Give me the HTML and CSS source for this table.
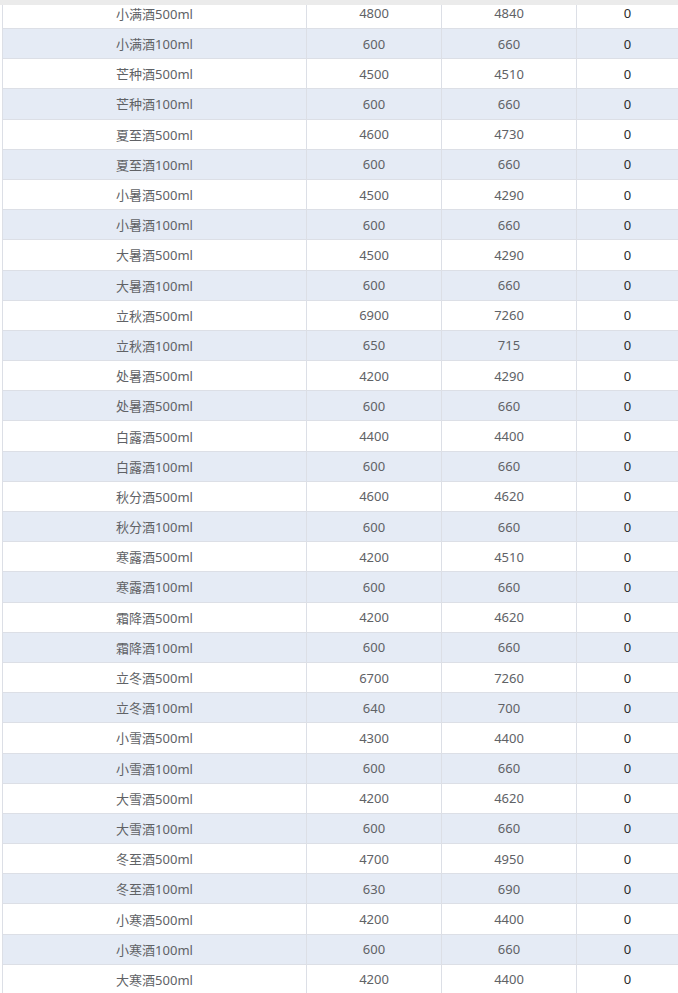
FILE: index.html
```html
<!DOCTYPE html>
<html lang="zh-CN">
<head>
<meta charset="utf-8">
<title>价格表</title>
<link rel="stylesheet" href="styles.css">
</head>
<body>
<div class="topbar"></div>
<div class="wrap">
  <div class="table" id="tbl">
    <div class="row"><div class="c c1">小满酒500ml</div><div class="c c2">4800</div><div class="c c3">4840</div><div class="c c4">0</div></div>
    <div class="row alt"><div class="c c1">小满酒100ml</div><div class="c c2">600</div><div class="c c3">660</div><div class="c c4">0</div></div>
    <div class="row"><div class="c c1">芒种酒500ml</div><div class="c c2">4500</div><div class="c c3">4510</div><div class="c c4">0</div></div>
    <div class="row alt"><div class="c c1">芒种酒100ml</div><div class="c c2">600</div><div class="c c3">660</div><div class="c c4">0</div></div>
    <div class="row"><div class="c c1">夏至酒500ml</div><div class="c c2">4600</div><div class="c c3">4730</div><div class="c c4">0</div></div>
    <div class="row alt"><div class="c c1">夏至酒100ml</div><div class="c c2">600</div><div class="c c3">660</div><div class="c c4">0</div></div>
    <div class="row"><div class="c c1">小暑酒500ml</div><div class="c c2">4500</div><div class="c c3">4290</div><div class="c c4">0</div></div>
    <div class="row alt"><div class="c c1">小暑酒100ml</div><div class="c c2">600</div><div class="c c3">660</div><div class="c c4">0</div></div>
    <div class="row"><div class="c c1">大暑酒500ml</div><div class="c c2">4500</div><div class="c c3">4290</div><div class="c c4">0</div></div>
    <div class="row alt"><div class="c c1">大暑酒100ml</div><div class="c c2">600</div><div class="c c3">660</div><div class="c c4">0</div></div>
    <div class="row"><div class="c c1">立秋酒500ml</div><div class="c c2">6900</div><div class="c c3">7260</div><div class="c c4">0</div></div>
    <div class="row alt"><div class="c c1">立秋酒100ml</div><div class="c c2">650</div><div class="c c3">715</div><div class="c c4">0</div></div>
    <div class="row"><div class="c c1">处暑酒500ml</div><div class="c c2">4200</div><div class="c c3">4290</div><div class="c c4">0</div></div>
    <div class="row alt"><div class="c c1">处暑酒500ml</div><div class="c c2">600</div><div class="c c3">660</div><div class="c c4">0</div></div>
    <div class="row"><div class="c c1">白露酒500ml</div><div class="c c2">4400</div><div class="c c3">4400</div><div class="c c4">0</div></div>
    <div class="row alt"><div class="c c1">白露酒100ml</div><div class="c c2">600</div><div class="c c3">660</div><div class="c c4">0</div></div>
    <div class="row"><div class="c c1">秋分酒500ml</div><div class="c c2">4600</div><div class="c c3">4620</div><div class="c c4">0</div></div>
    <div class="row alt"><div class="c c1">秋分酒100ml</div><div class="c c2">600</div><div class="c c3">660</div><div class="c c4">0</div></div>
    <div class="row"><div class="c c1">寒露酒500ml</div><div class="c c2">4200</div><div class="c c3">4510</div><div class="c c4">0</div></div>
    <div class="row alt"><div class="c c1">寒露酒100ml</div><div class="c c2">600</div><div class="c c3">660</div><div class="c c4">0</div></div>
    <div class="row"><div class="c c1">霜降酒500ml</div><div class="c c2">4200</div><div class="c c3">4620</div><div class="c c4">0</div></div>
    <div class="row alt"><div class="c c1">霜降酒100ml</div><div class="c c2">600</div><div class="c c3">660</div><div class="c c4">0</div></div>
    <div class="row"><div class="c c1">立冬酒500ml</div><div class="c c2">6700</div><div class="c c3">7260</div><div class="c c4">0</div></div>
    <div class="row alt"><div class="c c1">立冬酒100ml</div><div class="c c2">640</div><div class="c c3">700</div><div class="c c4">0</div></div>
    <div class="row"><div class="c c1">小雪酒500ml</div><div class="c c2">4300</div><div class="c c3">4400</div><div class="c c4">0</div></div>
    <div class="row alt"><div class="c c1">小雪酒100ml</div><div class="c c2">600</div><div class="c c3">660</div><div class="c c4">0</div></div>
    <div class="row"><div class="c c1">大雪酒500ml</div><div class="c c2">4200</div><div class="c c3">4620</div><div class="c c4">0</div></div>
    <div class="row alt"><div class="c c1">大雪酒100ml</div><div class="c c2">600</div><div class="c c3">660</div><div class="c c4">0</div></div>
    <div class="row"><div class="c c1">冬至酒500ml</div><div class="c c2">4700</div><div class="c c3">4950</div><div class="c c4">0</div></div>
    <div class="row alt"><div class="c c1">冬至酒100ml</div><div class="c c2">630</div><div class="c c3">690</div><div class="c c4">0</div></div>
    <div class="row"><div class="c c1">小寒酒500ml</div><div class="c c2">4200</div><div class="c c3">4400</div><div class="c c4">0</div></div>
    <div class="row alt"><div class="c c1">小寒酒100ml</div><div class="c c2">600</div><div class="c c3">660</div><div class="c c4">0</div></div>
    <div class="row"><div class="c c1">大寒酒500ml</div><div class="c c2">4200</div><div class="c c3">4400</div><div class="c c4">0</div></div>
  </div>
</div>
</body>
</html>
```

FILE: styles.css
```css
html, body {
  margin: 0;
  padding: 0;
  background: #ffffff;
  overflow: hidden;
}
body {
  font-family: "Noto Sans", "Noto Sans CJK SC", sans-serif;
  font-size: 13px;
  color: #606266;
}
.topbar {
  position: absolute;
  left: 0;
  top: 0;
  width: 100%;
  height: 5px;
  background: #ebebeb;
  z-index: 2;
}
.wrap {
  padding-left: 2px;
  margin-top: -1.2px;
}
.table {
  border-left: 1px solid #dcdfe6;
  width: 676px;
}
.row {
  display: flex;
  height: 30.2px;
  box-sizing: border-box;
  border-bottom: 1px solid #dcdfe6;
  background: #ffffff;
}
.row.alt {
  background: #e5ebf5;
}
.c {
  display: flex;
  align-items: center;
  justify-content: center;
  box-sizing: border-box;
  white-space: nowrap;
}
.c1 { width: 304px; border-right: 1px solid #dcdfe6; }
.c2 { width: 135px; border-right: 1px solid #dcdfe6; }
.c3 { width: 135px; border-right: 1px solid #dcdfe6; }
.c4 { width: 101px; color: #2a2a2a; }
```
